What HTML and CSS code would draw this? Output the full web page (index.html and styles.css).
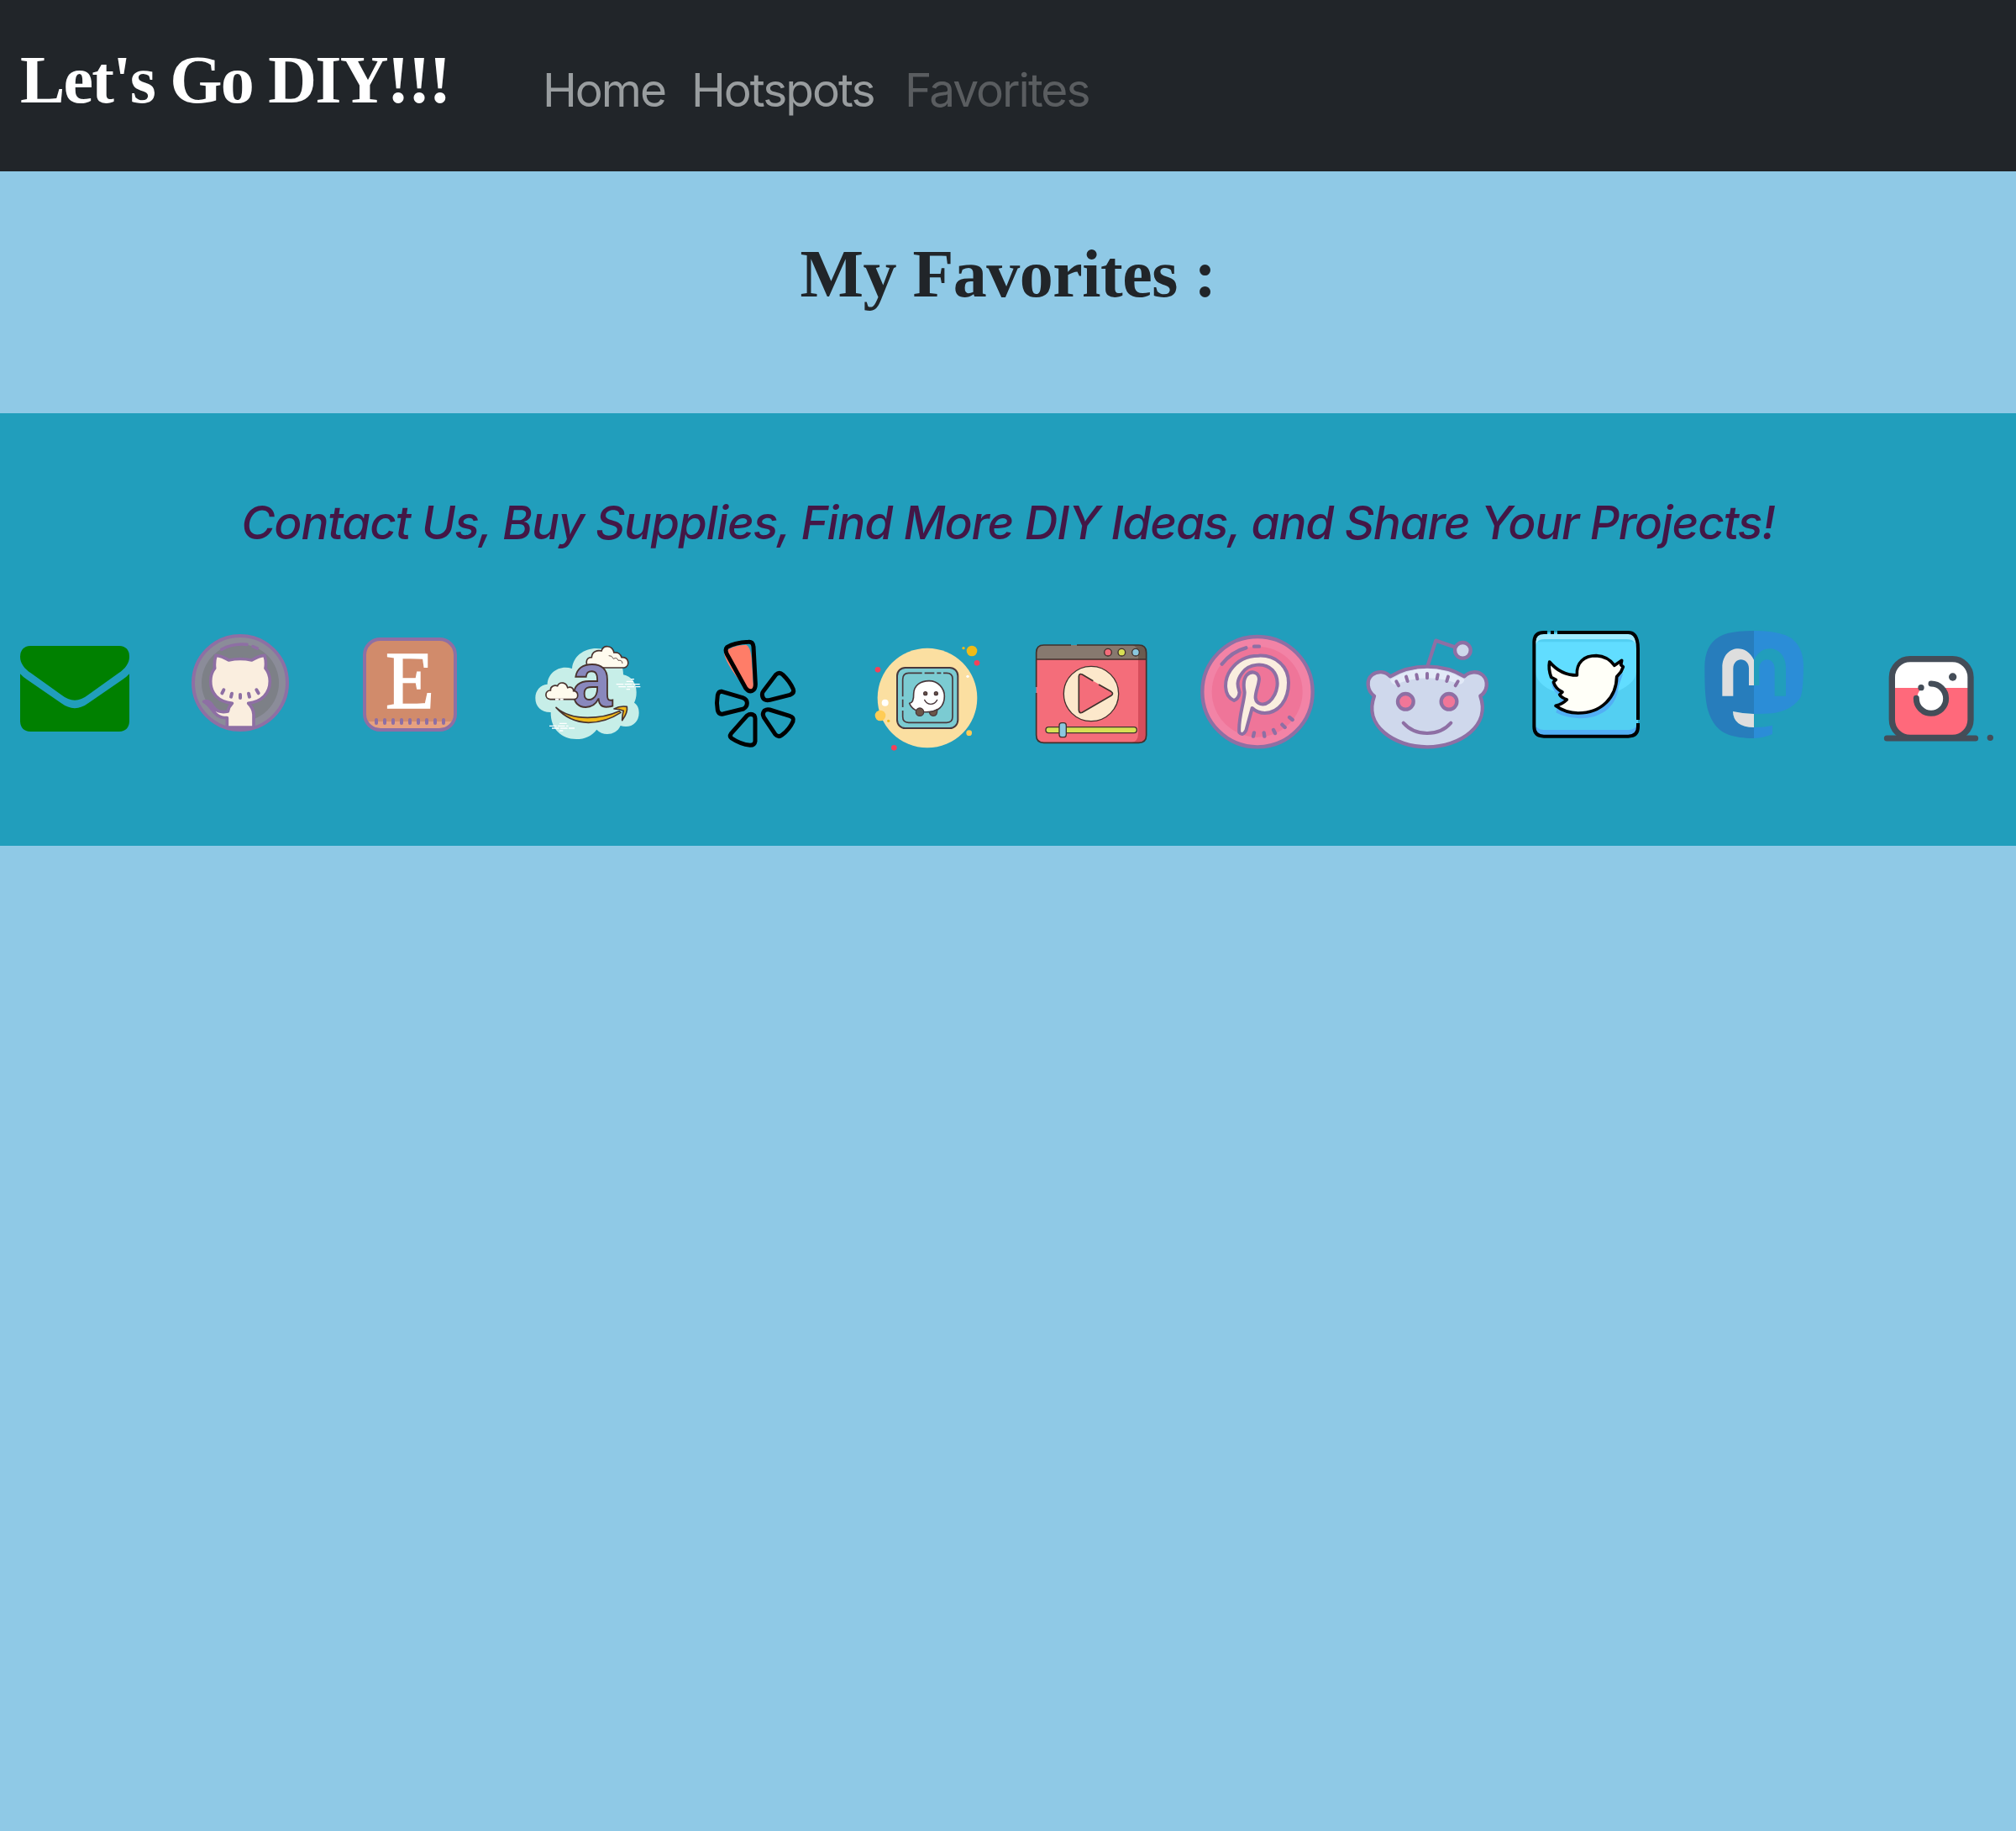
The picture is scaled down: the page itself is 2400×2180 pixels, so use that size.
FILE: index.html
```html
<!DOCTYPE html>
<html lang="en">
<head>
<meta charset="utf-8">
<title>Let's Go DIY!!!</title>
<link rel="stylesheet" href="styles.css">
</head>
<body>
<header class="navbar">
  <a class="brand">Let's Go DIY!!!</a>
  <nav class="links">
    <a class="home">Home</a>
    <a class="hotspots">Hotspots</a>
    <a class="favorites">Favorites</a>
  </nav>
</header>
<main class="main"><h1 class="title">My Favorites :</h1></main>
<footer class="footer">
  <p class="tagline">Contact Us, Buy Supplies, Find More DIY Ideas, and Share Your Projects!</p>
  <div class="icons">
    <svg class="icon" viewBox="0 0 594 480" fill="#008000">
      <path d="M108 87H426Q462 89 462 126C462 150 446 169 424 184L315 262Q267 300 219 262L110 184C88 169 72 150 72 126Q73 89 108 87Z"/>
      <path d="M72 187Q82 198 96 207L218 291Q267 328 316 291L438 207Q452 198 462 187V357Q460 391 426 393H108Q74 391 72 357Z"/>
    </svg>
    <svg class="icon" viewBox="594 0 594 480">
      <circle cx="858" cy="219" r="168" fill="#8b8c99"/>
      <circle cx="858" cy="219" r="138" fill="#7d8087"/>
      <path d="M791 100Q830 77 882 82M903 89L919 96" fill="none" stroke="#8e6fa4" stroke-width="11" stroke-linecap="round"/>
      <path d="M811 378V344C760 345 760 301 728 286Q747 278 762 305Q779 329 814 321Q817 303 829 292C779 286 752 257 752 213Q752 185 767 167Q764 145 771 121Q792 122 817 138Q858 129 899 138Q924 122 945 121Q952 145 948 167Q964 187 964 213C964 257 934 286 887 292Q905 309 906 332V378Z" fill="#faeedf" stroke="#8e6fa4" stroke-width="11" stroke-linejoin="round"/>
      <circle cx="858" cy="219" r="168" fill="none" stroke="#8e6fa4" stroke-width="12"/>
      <path d="M799 244L793 256M828 257L825 269M858 261V273M888 257L891 269M916 244L923 256" stroke="#8e6fa4" stroke-width="12" stroke-linecap="round"/>
    </svg>
    <svg class="icon" viewBox="-12 0 594 480">
      <rect x="102" y="63" width="324" height="324" rx="56" fill="#d18b6b"/>
      <path d="M108 357H420Q407 381 366 381H162Q121 381 108 357Z" fill="#e7a17f"/>
      <rect x="102" y="63" width="324" height="324" rx="56" fill="none" stroke="#8e6fa4" stroke-width="12"/>
      <path d="M144 351V363M174 351V363M204 351V363M234 351V363M264 351V363M294 351V363M324 351V363M354 351V363M384 351V363" stroke="#8e6fa4" stroke-width="12" stroke-linecap="round"/>
      <text class="etsy-letter" x="177" y="308" textLength="174" lengthAdjust="spacingAndGlyphs">E</text>
    </svg>
    <svg class="icon" viewBox="582 0 594 480">
      <path d="M843 168C847 125 884 96 930 96C988 96 1027 137 1026 190C1055 195 1073 220 1073 253Q1073 275 1065 290C1077 297 1082 311 1082 326C1082 355 1062 375 1035 375Q1025 375 1016 372C1002 407 953 411 931 386C913 409 890 420 858 420C805 420 766 383 767 324C733 325 712 304 712 273C712 246 730 226 755 224C756 184 797 153 843 168Z" fill="#c7eee8"/>
      <path d="M910 165C888 160 890 127 913 128C914 108 933 101 948 105C955 82 987 84 993 111C1007 109 1017 117 1020 128C1047 126 1051 159 1030 165Z" fill="#fffbee" stroke="#49332f" stroke-width="5"/>
      <path d="M974 122Q985 120 991 133Q1003 126 1008 139Q1022 136 1023 150" fill="none" stroke="#49332f" stroke-width="2.5"/>
      <text class="amazon-letter" x="842" y="302" textLength="144" lengthAdjust="spacingAndGlyphs">a</text>
      <path d="M765 278C744 277 745 245 766 246C765 231 780 226 791 230C800 212 823 218 827 236C841 231 849 240 848 248C868 249 868 277 850 278Z" fill="#fffbee" stroke="#49332f" stroke-width="5"/>
      <path d="M783 278H812" stroke="#fff" stroke-width="6" stroke-dasharray="13 4"/>
      <path d="M786 307Q827 343 898 343Q961 343 1011 320L1017 325Q964 360 902 361Q832 359 786 307ZM993 312Q1014 300 1039 304Q1043 324 1022 353Q1023 330 1027 319Q1010 312 993 312Z" fill="#f0ba19" stroke="#49332f" stroke-width="5" stroke-linejoin="round"/>
      <path d="M1054 206H1065M1037 214H1062M1001 224H1085M1009 233H1087M1037 242H1050M798 364H825M762 373H830M771 381H852M798 390H811" stroke="#fff" stroke-width="4" stroke-dasharray="26 4"/>
    </svg>
    <svg class="icon" viewBox="-84 0 594 480">
      <path d="M126 112Q150 85 205 83Q220 90 224 130L232 250Q205 250 180 210Q130 145 126 112Z" fill="#ff7d68"/>
      <g fill="none" stroke="#000" stroke-width="15" stroke-linejoin="round">
        <path d="M137 91Q166 75 213 73Q229 71 231 90L238 222C239 250 218 256 204 239L136 116Q128 100 137 91Z"/>
        <path d="M311 190Q323 178 336 190Q362 215 373 242Q378 255 361 262L290 280Q264 286 262 261Q262 254 266 249Z"/>
        <path d="M118 250L192 272Q208 278 208 291Q208 305 195 312L122 330Q107 333 103 317Q98 290 103 263Q107 248 118 250Z"/>
        <path d="M208 336Q222 326 234 336Q237 341 237 347V428Q235 442 219 442Q184 438 153 417Q144 410 151 400Z"/>
        <path d="M289 315L360 337Q377 342 372 357Q359 386 332 406Q320 415 309 403L268 342Q261 329 270 318Q279 312 289 315Z"/>
      </g>
    </svg>
    <svg class="icon" viewBox="510 0 594 480">
      <circle cx="852" cy="273" r="178" fill="#fbdfa1"/>
      <g fill="#efbb18"><circle cx="1011" cy="105" r="19"/><circle cx="981" cy="95" r="5"/><circle cx="713" cy="355" r="5"/></g>
      <g fill="#fc5"><circle cx="684" cy="336" r="19"/><circle cx="1001" cy="398" r="10"/></g>
      <g fill="#f44159"><circle cx="675" cy="172" r="10"/><circle cx="1029" cy="148" r="10"/><circle cx="733" cy="451" r="10"/></g>
      <g fill="#fff"><circle cx="701" cy="290" r="12"/><circle cx="996" cy="196" r="5"/></g>
      <rect x="744" y="165" width="217" height="216" rx="29" fill="#7bcbd2" stroke="#49383c" stroke-width="6"/>
      <path d="M833 184H785Q764 184 764 207V268M764 278V306M764 318V340Q764 361 785 361H921Q942 361 942 340V204Q942 184 921 184H909M901 184H886M877 184H842" fill="none" stroke="#49383c" stroke-width="5"/>
      <path d="M788 292Q804 290 803 258C804 226 829 212 858 212C890 212 913 237 913 267C913 302 891 323 855 323Q800 326 788 292Z" fill="#fff" stroke="#49383c" stroke-width="5" stroke-linejoin="round"/>
      <g fill="#6b5549" stroke="#49383c" stroke-width="4"><circle cx="825" cy="323" r="14"/><path d="M859 323Q874 322 887 314Q889 337 873 337Q861 336 859 323Z"/><circle cx="845" cy="257" r="6"/><circle cx="883" cy="257" r="6"/></g>
      <path d="M842 280Q850 295 864 295Q879 295 887 280" fill="none" stroke="#49383c" stroke-width="4" stroke-linecap="round"/>
    </svg>
    <svg class="icon" viewBox="-36 0 594 480">
      <rect x="101" y="84" width="393" height="349" rx="27" fill="#f46d7a"/>
      <path d="M465 135H494V406Q494 433 467 433H440Q465 430 465 400Z" fill="#d64e5c"/>
      <path d="M101 135V111Q101 84 128 84H467Q494 84 494 111V135Z" fill="#87796f"/>
      <path d="M445 84H467Q494 84 494 111V135H465V105Q460 90 445 84Z" fill="#6b5b4f"/>
      <path d="M225 84H128Q101 84 101 111V234M101 255V406Q101 433 128 433H467Q494 433 494 406V111Q494 84 467 84H246M101 135H494" fill="none" stroke="#40312d" stroke-width="5"/>
      <g stroke="#40312d" stroke-width="4"><circle cx="357" cy="110" r="13" fill="#f46d7a"/><circle cx="406" cy="110" r="13" fill="#d8df55"/><circle cx="456" cy="110" r="13" fill="#8bc8df"/>
      <circle cx="297" cy="258" r="98" fill="#fce8cb"/>
      <rect x="135" y="377" width="325" height="21" rx="10" fill="#d8df55"/><rect x="183" y="362" width="25" height="51" rx="9" fill="#8bc8df"/></g>
      <path d="M253 196Q254 184 265 189L368 250Q379 257 368 265L265 325Q254 329 253 316Z" fill="#f46d7a"/>
      <path d="M304 212L265 189Q254 184 253 196V316Q254 329 265 325L368 265Q379 257 368 250L324 225" fill="none" stroke="#40312d" stroke-width="5"/>
    </svg>
    <svg class="icon" viewBox="558 0 594 480">
      <circle cx="891" cy="251" r="197" fill="#f283a6"/><circle cx="890" cy="251" r="162" fill="#ef7599"/>
      <circle cx="891" cy="251" r="197" fill="none" stroke="#8e6fa4" stroke-width="13"/>
      <path d="M807 282C768 266 771 208 795 173C820 137 858 122 895 122C955 119 1002 159 1002 218C1002 280 967 326 917 327Q891 327 872 309L850 389Q838 411 826 396C821 350 844 286 845 253Q837 211 852 192C870 172 896 182 897 205C895 231 882 254 884 274C887 296 913 302 932 287C965 258 973 204 944 173C916 145 860 149 836 184C812 216 822 235 827 253Q824 277 807 282Z" fill="#faeedf" stroke="#8e6fa4" stroke-width="12" stroke-linejoin="round"/>
      <path d="M764 152Q800 107 850 94M879 89H897M879 397L876 410M914 397L916 410M948 387L954 399M979 368L989 378M1005 342L1016 351" fill="none" stroke="#8e6fa4" stroke-width="13" stroke-linecap="round"/>
    </svg>
    <svg class="icon" viewBox="-48 0 594 480" fill="none" stroke="#8e6fa4" stroke-width="13" stroke-linejoin="round">
      <path d="M299 157L328 68L398 92"/>
      <circle cx="424" cy="103" r="28" fill="#cfd8ec"/>
      <path d="M108 266C82 247 78 208 101 190C119 176 147 176 165 196C243 149 352 149 430 196C447 177 478 176 496 192C518 213 512 249 487 266C524 371 416 448 297 448C179 448 69 372 108 266Z" fill="#cfd8ec"/>
      <path d="M165 207Q227 168 297 168Q367 168 430 207Q429 220 415 224Q297 178 181 226Q166 218 165 207Z" fill="#e2e9f7" stroke="none"/>
      <path d="M187 214L195 229M222 197L227 213M259 190L262 205M297 186V202M335 190L332 205M372 197L367 213M407 214L398 229M212 362Q244 399 297 399Q350 399 382 362" stroke-linecap="round" stroke-width="12"/>
      <g fill="#f17698"><circle cx="220" cy="286" r="28"/><circle cx="375" cy="286" r="28"/></g>
    </svg>
    <svg class="icon" viewBox="546 0 594 480">
      <rect x="679" y="39" width="371" height="371" rx="32" fill="#53cff2"/>
      <path d="M684 180V73H1044V180Q1042 220 975 250H751Q688 225 684 180Z" fill="#61ddff"/>
      <path d="M684 83V70Q686 45 710 45H1018Q1041 45 1044 83Q1035 63 1010 63H715Q690 63 684 83Z" fill="#a0eaff"/>
      <path d="M684 370Q690 387 712 387H1018Q1039 387 1044 370Q1044 405 1018 405H712Q684 405 684 370Z" fill="#52aff5"/>
      <path d="M726 39H714Q679 39 679 74V376Q679 410 714 410H1015Q1050 410 1050 376V363M1050 351V98Q1050 39 1015 39H762M738 39H750" fill="none" stroke="#000" stroke-width="12"/>
      <path d="M740 220Q747 255 776 268L757 325C832 365 970 353 981 230L997 185L970 205Z" fill="#52aff5"/>
      <path d="M734 144Q774 192 832 192C829 145 858 122 901 122Q942 124 966 157L992 139L989 155L997 162L989 180L974 197C973 270 920 327 836 327Q791 327 756 301Q780 295 796 279Q775 271 770 261L780 252Q756 241 748 216L757 208L740 199Q729 169 734 144Z" fill="#fffff8" stroke="#000" stroke-width="11" stroke-linejoin="round"/>
    </svg>
    <svg class="icon" viewBox="-60 0 594 480">
      <path d="M264 33Q207 33 170 42Q87 65 88 165C88 270 93 320 119 360C146 403 190 416 264 417V378Q190 377 189 321Q224 329 264 330V33Z" fill="#277dbc"/>
      <path d="M264 33Q333 33 377 49Q440 75 441 160Q440 260 427 277Q392 321 328 328Q293 331 264 330V33ZM264 378Q300 379 330 371V402Q300 415 264 417Z" fill="#2b8dd7"/>
      <path d="M151 266V165C151 88 234 73 264 137V228H246V167C246 128 191 123 190 169V266ZM189 321Q224 329 264 330V378Q190 377 189 321Z" fill="#dedede"/>
      <path d="M264 137C294 73 378 88 378 165V266H338V169C337 123 283 128 283 167V228H264Z" fill="#219ebc"/>
    </svg>
    <svg class="icon" viewBox="534 0 594 480">
      <rect x="757" y="134" width="281" height="281" rx="65" fill="#fff"/>
      <path d="M757 237H1038V355Q1032 415 978 415H816Q757 408 757 355Z" fill="#ff697b"/>
      <circle cx="897" cy="275" r="50" fill="#fff"/>
      <path d="M846 274L861 236L890 222V270Z" fill="#fff"/>
      <rect x="757" y="134" width="281" height="281" rx="65" fill="none" stroke="#444d58" stroke-width="22"/>
      <path d="M739 417H1055M897 222A53 53 0 1 1 844 274" fill="none" stroke="#444d58" stroke-width="21" stroke-linecap="round"/>
      <g fill="#444d58"><circle cx="974" cy="198" r="14"/><circle cx="861" cy="236" r="11"/><circle cx="1108" cy="415" r="11"/></g>
    </svg>
  </div>
</footer>
</body>
</html>
```
FILE: styles.css
```css
body { margin: 0; background: #8fc9e6; font-family: Inter, "Liberation Sans", sans-serif; color: #212529; }
.navbar { height: 204px; background: #212529; display: flex; align-items: flex-start; box-sizing: border-box; padding: 40px 0 0 24px; }
.brand { width: 622px; font: bold 80px/110px "Liberation Serif", serif; letter-spacing: -1.75px; color: #fff; white-space: nowrap; }
.links { display: flex; padding-top: 25px; font-size: 55px; line-height: 84px; letter-spacing: -2px; color: #999d9f; }
.home { width: 177px; }
.hotspots { width: 254px; }
.favorites { color: #5a5d60; }
.main { height: 288px; box-sizing: border-box; padding-top: 67px; }
.title { margin: 0; text-align: center; font: bold 80px/110px "Liberation Serif", serif; letter-spacing: -0.5px; white-space: nowrap; }
.footer { height: 515px; background: #219ebc; box-sizing: border-box; padding-top: 88px; }
.tagline { margin: 0; height: 160px; text-align: center; font-size: 55px; line-height: 84px; font-weight: 500; font-style: italic; letter-spacing: -1.2px; color: #431746; white-space: nowrap; }
.icons { display: flex; }
.icon { width: 198px; height: 160px; flex: none; }
.etsy-letter { font: 290px "Liberation Serif", serif; fill: #fff; stroke: #fff; stroke-width: 5px; }
.amazon-letter { font: bold 278px "Liberation Sans", sans-serif; fill: #8988bd; stroke: #49332f; stroke-width: 6px; }
```
